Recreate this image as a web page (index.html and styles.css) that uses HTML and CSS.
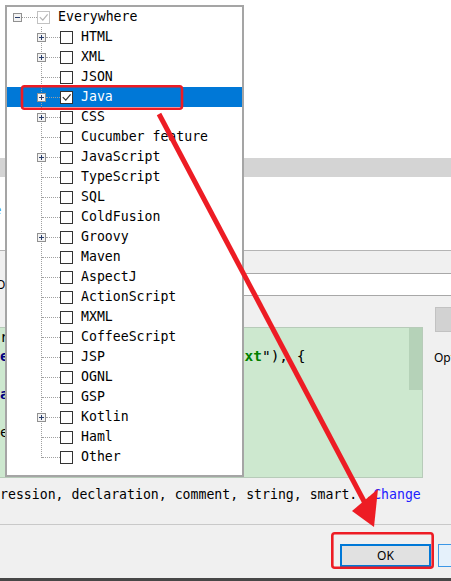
FILE: index.html
```html
<!DOCTYPE html>
<html>
<head>
<meta charset="utf-8">
<link rel="stylesheet" href="styles.css">
</head>
<body>
<div class="screen">
  <div class="bg-top"></div>
  <div class="bg-band"></div>
  <div class="bg-white2"><span class="frag-blue">e</span></div>
  <div class="tabbar"></div>
  <div class="field-row"><span class="field-label">O</span><div class="field"></div></div>
  <div class="options">
    <div class="opt-main">
      <div class="editor">
        <div class="code">
          <div class="ln">return matcher;</div>
          <div class="ln"><span class="kw">e</span>.forEach(file -&gt; filter(<span class="str">".txt</span>"), {</div>
          <div class="ln">    process(file);</div>
          <div class="ln"><span class="kw">assert</span> text != null;</div>
          <div class="ln">    count++;</div>
          <div class="ln">e.printStackTrace();</div>
          <div class="ln">    }</div>
          <div class="ln">  }</div>
        </div>
        <div class="vscroll"><div class="thumb"></div></div>
      </div>
      <div class="context">ression, declaration, comment, string, smart...<span class="link">Change</span></div>
    </div>
    <div class="opt-side">
      <div class="side-btn"></div>
      <div class="side-label">Opt</div>
    </div>
  </div>
  <div class="footer">
    <div class="btn btn-ok">OK</div>
    <div class="btn btn-cancel">Cancel</div>
  </div>
  <div class="frame-bottom"></div>

  <div class="popup">
    <div class="row root">
      <svg class="exp" width="9" height="9" viewBox="0 0 9 9"><rect x="0.5" y="0.5" width="8" height="8" fill="#f3f3f3" stroke="#919191"/><path d="M2 4.5h5" stroke="#2a3f6c"/></svg>
      <span class="hline root-h"></span>
      <span class="cb dis"><svg width="11" height="11" viewBox="0 0 11 11"><path d="M1.8 5.2 L4.8 8.2 L9.6 2.4" fill="none" stroke="#b4b4b4" stroke-width="1.2"/></svg></span>
      <span class="lbl">Everywhere</span>
    </div>
    <div class="children">
      <div class="row"><span class="trunk"><svg class="exp" width="9" height="9" viewBox="0 0 9 9"><rect x="0.5" y="0.5" width="8" height="8" fill="#f3f3f3" stroke="#919191"/><path d="M2 4.5h5M4.5 2v5" stroke="#2a3f6c"/></svg><span class="hline"></span></span><span class="cb"></span><span class="lbl">HTML</span></div>
      <div class="row"><span class="trunk"><svg class="exp" width="9" height="9" viewBox="0 0 9 9"><rect x="0.5" y="0.5" width="8" height="8" fill="#f3f3f3" stroke="#919191"/><path d="M2 4.5h5M4.5 2v5" stroke="#2a3f6c"/></svg><span class="hline"></span></span><span class="cb"></span><span class="lbl">XML</span></div>
      <div class="row"><span class="trunk"><span class="hline plain"></span></span><span class="cb"></span><span class="lbl">JSON</span></div>
      <div class="row sel"><span class="trunk"><svg class="exp" width="9" height="9" viewBox="0 0 9 9"><rect x="0.5" y="0.5" width="8" height="8" fill="#f3f3f3" stroke="#919191"/><path d="M2 4.5h5M4.5 2v5" stroke="#2a3f6c"/></svg><span class="hline"></span></span><span class="cb"><svg width="11" height="11" viewBox="0 0 11 11"><path d="M1.8 5.2 L4.8 8.2 L9.6 2.4" fill="none" stroke="#333" stroke-width="1.2"/></svg></span><span class="lbl">Java</span></div>
      <div class="row"><span class="trunk"><svg class="exp" width="9" height="9" viewBox="0 0 9 9"><rect x="0.5" y="0.5" width="8" height="8" fill="#f3f3f3" stroke="#919191"/><path d="M2 4.5h5M4.5 2v5" stroke="#2a3f6c"/></svg><span class="hline"></span></span><span class="cb"></span><span class="lbl">CSS</span></div>
      <div class="row"><span class="trunk"><span class="hline plain"></span></span><span class="cb"></span><span class="lbl">Cucumber feature</span></div>
      <div class="row"><span class="trunk"><svg class="exp" width="9" height="9" viewBox="0 0 9 9"><rect x="0.5" y="0.5" width="8" height="8" fill="#f3f3f3" stroke="#919191"/><path d="M2 4.5h5M4.5 2v5" stroke="#2a3f6c"/></svg><span class="hline"></span></span><span class="cb"></span><span class="lbl">JavaScript</span></div>
      <div class="row"><span class="trunk"><span class="hline plain"></span></span><span class="cb"></span><span class="lbl">TypeScript</span></div>
      <div class="row"><span class="trunk"><span class="hline plain"></span></span><span class="cb"></span><span class="lbl">SQL</span></div>
      <div class="row"><span class="trunk"><span class="hline plain"></span></span><span class="cb"></span><span class="lbl">ColdFusion</span></div>
      <div class="row"><span class="trunk"><svg class="exp" width="9" height="9" viewBox="0 0 9 9"><rect x="0.5" y="0.5" width="8" height="8" fill="#f3f3f3" stroke="#919191"/><path d="M2 4.5h5M4.5 2v5" stroke="#2a3f6c"/></svg><span class="hline"></span></span><span class="cb"></span><span class="lbl">Groovy</span></div>
      <div class="row"><span class="trunk"><span class="hline plain"></span></span><span class="cb"></span><span class="lbl">Maven</span></div>
      <div class="row"><span class="trunk"><span class="hline plain"></span></span><span class="cb"></span><span class="lbl">AspectJ</span></div>
      <div class="row"><span class="trunk"><span class="hline plain"></span></span><span class="cb"></span><span class="lbl">ActionScript</span></div>
      <div class="row"><span class="trunk"><span class="hline plain"></span></span><span class="cb"></span><span class="lbl">MXML</span></div>
      <div class="row"><span class="trunk"><span class="hline plain"></span></span><span class="cb"></span><span class="lbl">CoffeeScript</span></div>
      <div class="row"><span class="trunk"><span class="hline plain"></span></span><span class="cb"></span><span class="lbl">JSP</span></div>
      <div class="row"><span class="trunk"><span class="hline plain"></span></span><span class="cb"></span><span class="lbl">OGNL</span></div>
      <div class="row"><span class="trunk"><span class="hline plain"></span></span><span class="cb"></span><span class="lbl">GSP</span></div>
      <div class="row"><span class="trunk"><svg class="exp" width="9" height="9" viewBox="0 0 9 9"><rect x="0.5" y="0.5" width="8" height="8" fill="#f3f3f3" stroke="#919191"/><path d="M2 4.5h5M4.5 2v5" stroke="#2a3f6c"/></svg><span class="hline"></span></span><span class="cb"></span><span class="lbl">Kotlin</span></div>
      <div class="row"><span class="trunk"><span class="hline plain"></span></span><span class="cb"></span><span class="lbl">Haml</span></div>
      <div class="row last"><span class="trunk"><span class="hline plain"></span></span><span class="cb"></span><span class="lbl">Other</span></div>
    </div>
  </div>

  <svg class="annot" width="451" height="581" viewBox="0 0 451 581">
    <rect x="22" y="86.3" width="160" height="22.5" rx="2.5" fill="none" stroke="#ed1c24" stroke-width="2.6"/>
    <rect x="332.3" y="533.3" width="100.4" height="34.4" rx="2.5" fill="none" stroke="#ed1c24" stroke-width="2.6"/>
    <line x1="159" y1="114" x2="366" y2="505" stroke="#ed1c24" stroke-width="5"/>
    <polygon points="352,511 378,489 374,527" fill="#ed1c24"/>
  </svg>
</div>
</body>
</html>
```

FILE: styles.css
```css
* { box-sizing: border-box; }

body {
  margin: 0;
  width: 451px;
  height: 581px;
  overflow: hidden;
  background: #f0f0f0;
  font-family: "Noto Sans", "Liberation Sans", sans-serif;
}

.screen {
  position: relative;
  width: 451px;
  height: 581px;
  overflow: hidden;
  background: #f0f0f0;
}

.bg-top { height: 158px; background: #fff; }
.bg-band { height: 19px; background: #d4d4d4; }

.bg-white2 {
  height: 73px;
  background: #fff;
  padding-top: 24px;
  font: 13px "Noto Sans", sans-serif;
  line-height: 16px;
}
.frag-blue { display: inline-block; margin-left: -6px; color: #3b8fe0; }

.tabbar {
  height: 23px;
  border-top: 1px solid #b4b4b4;
  background: #f0f0f0;
}

.field-row {
  height: 23px;
  display: flex;
  align-items: center;
}
.field-label {
  margin-left: -4px;
  font: 12px "Noto Sans", sans-serif;
  color: #000;
  width: 110px;
  white-space: nowrap;
}
.field {
  flex: 1;
  align-self: stretch;
  background: #fff;
  border-top: 1px solid #a8a8a8;
  border-bottom: 1px solid #a8a8a8;
}

.options {
  height: 228px;
  display: flex;
}
.opt-main { width: 423px; flex: none; }

.editor {
  margin-top: 31px;
  height: 151px;
  background: #cde8cf;
  border: 1px solid #b7cbb9;
  border-left: none;
  display: flex;
}
.code {
  flex: 1;
  font-family: "DejaVu Sans Mono", monospace;
  font-size: 14.5px;
  line-height: 19px;
  color: #000;
  overflow: hidden;
}
.ln { white-space: pre; height: 19px; }
.kw { color: #000080; font-weight: bold; }
.str { color: #008000; font-weight: bold; }

.vscroll { width: 13px; flex: none; }
.thumb { height: 62px; background: #b5d2b8; }

.context {
  margin-top: 7px;
  line-height: 20px;
  font-family: "DejaVu Sans Mono", monospace;
  font-size: 13.2px;
  color: #000;
  white-space: nowrap;
}
.link { color: #2121ff; }

.opt-side {
  margin-left: 12px;
  padding-top: 11px;
  white-space: nowrap;
}
.side-btn {
  width: 70px;
  height: 25px;
  background: #d2d2d2;
  border: 1px solid #c2c2c2;
}
.side-label {
  margin-top: 17px;
  line-height: 18px;
  font: 12px "Noto Sans", sans-serif;
  color: #000;
  margin-left: -1px;
}

.footer {
  height: 54px;
  border-top: 1px solid #c9c9c9;
  padding: 19px 0 0 340px;
  display: flex;
  gap: 7px;
}
.btn {
  flex: none;
  width: 91px;
  height: 23px;
  display: flex;
  align-items: center;
  justify-content: center;
  font: 12px "Noto Sans", sans-serif;
  color: #000;
}
.btn-ok { background: #e1e1e1; border: 2px solid #0078d7; }
.btn-cancel { background: #e5f1fb; border: 1px solid #3c97e6; }

.frame-bottom { height: 3px; background: #474747; }

/* dropdown tree overlay */
.popup {
  position: absolute;
  left: 5px;
  top: 5px;
  width: 239px;
  background: #fff;
  border: 2px solid #a5a5a5;
  padding-bottom: 8px;
  font-family: "DejaVu Sans Mono", monospace;
  font-size: 13.2px;
  color: #000;
}

.row {
  height: 20px;
  display: flex;
  align-items: center;
  padding-left: 34px;
}
.row.root { padding-left: 6px; }
.row.sel { background: #0078d7; color: #fff; }

.exp { display: block; flex: none; }

.hline {
  display: block;
  height: 0;
  border-top: 1px dotted #a0a0a0;
}
.root-h { width: 15px; }

.trunk {
  align-self: stretch;
  width: 19px;
  flex: none;
  display: flex;
  align-items: center;
  background-image: repeating-linear-gradient(to bottom, #a0a0a0 0 1px, transparent 1px 2px);
  background-size: 1px 100%;
  background-repeat: no-repeat;
  background-position: left top;
}
.row.last .trunk { background-size: 1px 11px; }
.trunk .exp { margin-left: -4px; }
.trunk .hline { flex: 1; }
.trunk .hline.plain { margin-left: 1px; }

.cb {
  flex: none;
  width: 13px;
  height: 13px;
  border: 1px solid #333;
  background: #fff;
  display: flex;
  align-items: center;
  justify-content: center;
}
.cb.dis { border-color: #c2c2c2; }
.cb svg { display: block; }

.lbl {
  margin-left: 8px;
  white-space: nowrap;
  line-height: 20px;
}

.annot {
  position: absolute;
  left: 0;
  top: 0;
  pointer-events: none;
}
```
